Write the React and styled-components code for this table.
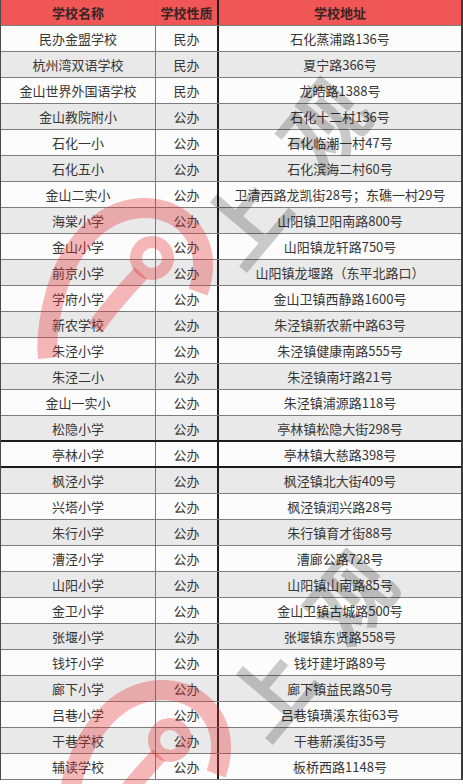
import React from "react";
import styled, { createGlobalStyle } from "styled-components";

const Global = createGlobalStyle`
  html, body { margin: 0; padding: 0; background: #ffffff; }
  body { font-family: "Noto Sans CJK SC", "Noto Sans", sans-serif; }
`;

const Page = styled.div`
  position: relative;
  width: 463px;
  height: 784px;
  overflow: hidden;
  background: #ffffff;
`;

const Table = styled.div`
  width: 463px;
  box-sizing: border-box;
  border-left: 1px solid #4a4a4a;
  border-right: 2px solid #3a3a3a;
  display: flex;
  flex-direction: column;
`;

const Row = styled.div`
  display: grid;
  grid-template-columns: 155px 63px 1fr;
  height: 26px;
  box-sizing: border-box;
  background: ${(p) => (p.$head ? "#f05656" : p.$alt ? "#e9e9e9" : "#fcfcfc")};
  border-bottom: ${(p) => (p.$dark ? "2px solid #1c1c1c" : "1px solid #7d7d7d")};
`;

const Cell = styled.div`
  display: flex;
  align-items: center;
  justify-content: center;
  box-sizing: border-box;
  white-space: nowrap;
  font-size: 13px;
  line-height: 1;
  color: ${(p) => (p.$head ? "#3a2424" : "#363636")};
  font-weight: ${(p) => (p.$head ? 700 : 400)};
  border-right: ${(p) =>
    p.$edge === "thin" ? "1px solid #7a7a7a" : p.$edge === "thick" ? "2px solid #1e1e1e" : "none"};
`;

const Watermark = styled.svg`
  position: absolute;
  left: 0;
  top: 0;
  width: 463px;
  height: 784px;
  pointer-events: none;
`;

const rows = [
  ["民办金盟学校", "民办", "石化蒸浦路136号"],
  ["杭州湾双语学校", "民办", "夏宁路366号"],
  ["金山世界外国语学校", "民办", "龙皓路1388号"],
  ["金山教院附小", "公办", "石化十二村136号"],
  ["石化一小", "公办", "石化临潮一村47号"],
  ["石化五小", "公办", "石化滨海二村60号"],
  ["金山二实小", "公办", "卫清西路龙凯街28号；东礁一村29号"],
  ["海棠小学", "公办", "山阳镇卫阳南路800号"],
  ["金山小学", "公办", "山阳镇龙轩路750号"],
  ["前京小学", "公办", "山阳镇龙堰路（东平北路口）"],
  ["学府小学", "公办", "金山卫镇西静路1600号"],
  ["新农学校", "公办", "朱泾镇新农新中路63号"],
  ["朱泾小学", "公办", "朱泾镇健康南路555号"],
  ["朱泾二小", "公办", "朱泾镇南圩路21号"],
  ["金山一实小", "公办", "朱泾镇浦源路118号"],
  ["松隐小学", "公办", "亭林镇松隐大街298号"],
  ["亭林小学", "公办", "亭林镇大慈路398号"],
  ["枫泾小学", "公办", "枫泾镇北大街409号"],
  ["兴塔小学", "公办", "枫泾镇润兴路28号"],
  ["朱行小学", "公办", "朱行镇育才街88号"],
  ["漕泾小学", "公办", "漕廊公路728号"],
  ["山阳小学", "公办", "山阳镇山南路85号"],
  ["金卫小学", "公办", "金山卫镇古城路500号"],
  ["张堰小学", "公办", "张堰镇东贤路558号"],
  ["钱圩小学", "公办", "钱圩建圩路89号"],
  ["廊下小学", "公办", "廊下镇益民路50号"],
  ["吕巷小学", "公办", "吕巷镇璜溪东街63号"],
  ["干巷学校", "公办", "干巷新溪街35号"],
  ["辅读学校", "公办", "板桥西路1148号"],
];

const pink = "rgba(228, 48, 48, 0.34)";
const grey = "rgba(0, 0, 0, 0.2)";

function Mark({ dx, dy, tx, ty }) {
  return (
    <g transform={`translate(${dx} ${dy})`}>
      <g fill="none" stroke={pink}>
        <circle cx="152" cy="258" r="16" strokeWidth="12" />
        <path
          d="M198 292 C216 244 184 206 142 208 C98 210 68 250 56 292 C48 320 46 340 48 358"
          strokeWidth="20"
        />
        <path d="M141 273 C127 288 111 306 95 328" strokeWidth="17" />
      </g>
      <text
        x={tx}
        y={ty}
        transform={`rotate(-50 ${tx} ${ty})`}
        fontFamily="'Noto Sans CJK SC', sans-serif"
        fontSize="84"
        fontWeight="700"
        letterSpacing="40"
        dominantBaseline="central"
        fill={grey}
      >
        上观
      </text>
    </g>
  );
}

export default function App() {
  return (
    <Page>
      <Global />
      <Table>
        <Row $head>
          <Cell $head $edge="thin">学校名称</Cell>
          <Cell $head $edge="thick">学校性质</Cell>
          <Cell $head>学校地址</Cell>
        </Row>
        {rows.map((r, i) => (
          <Row key={i} $alt={i % 2 === 1} $dark={i === 15 || i === 16}>
            <Cell $edge="thin">{r[0]}</Cell>
            <Cell $edge="thick">{r[1]}</Cell>
            <Cell>{r[2]}</Cell>
          </Row>
        ))}
      </Table>
      <Watermark viewBox="0 0 463 784">
        <Mark dx={0} dy={0} tx={214} ty={250} />
        <Mark dx={18} dy={482} tx={222} ty={240} />
      </Watermark>
    </Page>
  );
}
